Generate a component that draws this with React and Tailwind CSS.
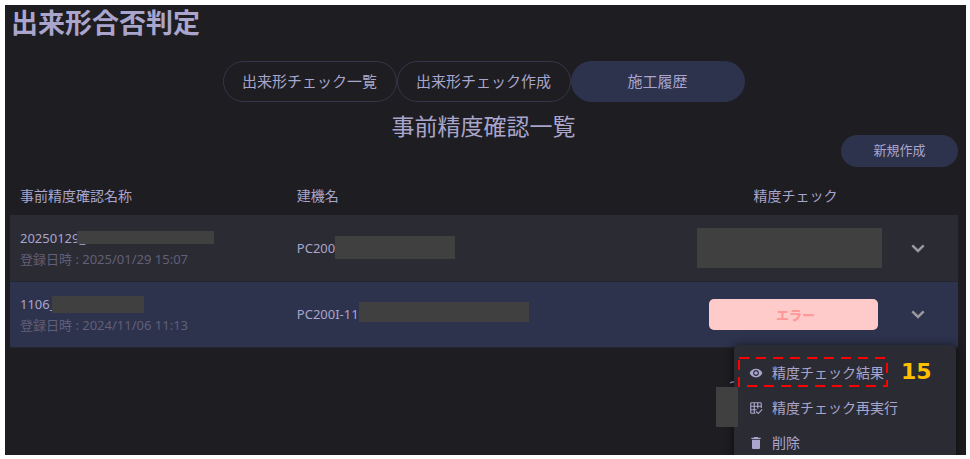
import React, { useState } from 'react';
import { MdDelete, MdVisibility } from 'react-icons/md';

const TABS = ['出来形チェック一覧', '出来形チェック作成', '施工履歴'];

const ROWS = [
  {
    id: 1,
    name: '20250129_',
    nameMask: '-ml-2 mb-0.5 h-[13px] w-[137px]',
    date: '登録日時 : 2025/01/29 15:07',
    machine: 'PC200',
    machineMask: 'mb-0.5 h-[23px] w-[120px]',
    error: false,
  },
  {
    id: 2,
    name: '1106_',
    nameMask: '-ml-1 mb-0.5 h-[17px] w-[92px]',
    date: '登録日時 : 2024/11/06 11:13',
    machine: 'PC200I-11',
    machineMask: 'mb-1.5 h-5 w-[170px]',
    error: true,
  },
];

const TableCheckIcon = () => (
  <svg viewBox="0 0 24 24" className="size-3.5" fill="none" stroke="currentColor" strokeWidth="2">
    <path d="M11 21H4.500A1.500 1.500 0 0 1 3 19.500V4.500A1.500 1.500 0 0 1 4.500 3H19.500A1.500 1.500 0 0 1 21 4.500V12M3 9H21M3 15H13M9 3V21M15 3V13" />
    <path d="M12 18L16 21.500L22.500 14.500" />
  </svg>
);

const ChevronIcon = () => (
  <svg viewBox="0 0 24 24" className="size-6" fill="none" stroke="currentColor" strokeWidth="2.5">
    <path d="M6.300 9.300L12 15L17.700 9.300" />
  </svg>
);

const MENU = [
  { label: '精度チェック結果', icon: <MdVisibility className="size-3.5" /> },
  { label: '精度チェック再実行', icon: <TableCheckIcon /> },
  { label: '削除', icon: <MdDelete className="size-4" /> },
];

const Mask = ({ className }) => <span className={`block shrink-0 bg-[#404040] ${className}`} />;

const HistoryTable = () => (
  <table className="w-full table-fixed text-left text-[13px] text-[#a9a5cc]">
    <thead>
      <tr className="h-10 text-sm">
        <th className="w-[29.2%] px-2.5 pt-0.5 font-normal">事前精度確認名称</th>
        <th className="w-[44.5%] px-2.5 pt-0.5 font-normal">建機名</th>
        <th className="w-[17.9%] pt-0.5 pl-1 text-center font-normal">精度チェック</th>
        <th aria-label="操作" />
      </tr>
    </thead>
    <tbody>
      {ROWS.map((row) => (
        <tr
          key={row.id}
          className={`h-[66px] border-b border-[#25252d] ${row.error ? 'bg-[#2d324d]' : 'bg-[#2b2b33]'}`}
        >
          <td className="px-2.5 pt-0.5">
            <div className="flex h-5 items-center">
              {row.name}
              <Mask className={row.nameMask} />
            </div>
            <div className="leading-5 text-[#625f78]">{row.date}</div>
          </td>
          <td className="px-2.5 pt-0.5">
            <div className="flex h-6 items-center">
              {row.machine}
              <Mask className={row.machineMask} />
            </div>
          </td>
          <td>
            {row.error ? (
              <div className="rounded-[5px] bg-[#ffcaca] pt-0.5 pl-1 text-center leading-[29px] font-black text-[#ff9a9a]">
                エラー
              </div>
            ) : (
              <Mask className="-mr-1 -ml-3 h-10" />
            )}
          </td>
          <td>
            <button aria-label="メニューを開く" className="mx-auto block text-[#9a9a9e]">
              <ChevronIcon />
            </button>
          </td>
        </tr>
      ))}
    </tbody>
  </table>
);

const ActionMenu = () => (
  <div className="absolute top-[340px] right-2.5 w-[222px] rounded-[5px] bg-[#2b2b33] py-2.5 text-[#a9a5cc] shadow-[0_2px_8px_2px_rgba(0,0,0,0.45)]">
    {MENU.map((item) => (
      <button key={item.label} className="flex h-[35px] w-full items-center gap-2 pl-3.5 text-sm">
        <span className="flex w-4 justify-center">{item.icon}</span>
        {item.label}
      </button>
    ))}
    {/* Step callout */}
    <svg className="absolute top-3 left-1 h-[30px] w-[150px]" fill="none">
      <rect x="1" y="1" width="148" height="28" stroke="#ff0000" strokeWidth="2" strokeDasharray="10 7" />
    </svg>
    <span className="absolute top-3 left-[167px] font-['DejaVu_Sans'] text-[22px] leading-[30px] font-bold text-[#ffc000]">
      15
    </span>
    <Mask className="absolute top-[42px] -left-[18px] h-10 w-[22px]" />
    <svg viewBox="0 0 4 3" className="absolute top-9 -left-1 h-[3px] w-1" fill="none" stroke="currentColor">
      <path d="M0 2L2 1L4 1" />
    </svg>
  </div>
);

export default function App() {
  const [tab, setTab] = useState(2);

  return (
    <div className="flex h-screen bg-white pt-[5px] pr-1 pb-1 pl-[5px] font-['Noto_Sans','Noto_Sans_CJK_JP',sans-serif]">
      <main className="relative flex-1 overflow-hidden bg-[#1e1d21] text-[#a9a5cc]">
        <h1 className="px-1.5 text-[27px] leading-9 font-bold">出来形合否判定</h1>

        <div className="mt-5 flex justify-center pr-1">
          {TABS.map((label, i) => (
            <button
              key={label}
              onClick={() => setTab(i)}
              className={`h-[41px] w-[174px] rounded-full border text-[15px] ${
                tab === i ? 'border-[#2d324d] bg-[#2d324d]' : 'border-[#37354a]'
              }`}
            >
              {label}
            </button>
          ))}
        </div>

        <h2 className="mt-2 pr-1 text-center text-[23px] leading-8">事前精度確認一覧</h2>

        <div className="-mt-[7px] flex justify-end pr-2">
          <button className="h-8 w-[117px] rounded-full bg-[#2d324d] text-[13px]">新規作成</button>
        </div>

        <div className="mt-2 pr-2 pl-[5px]">
          <HistoryTable />
        </div>

        <ActionMenu />
      </main>
    </div>
  );
}
